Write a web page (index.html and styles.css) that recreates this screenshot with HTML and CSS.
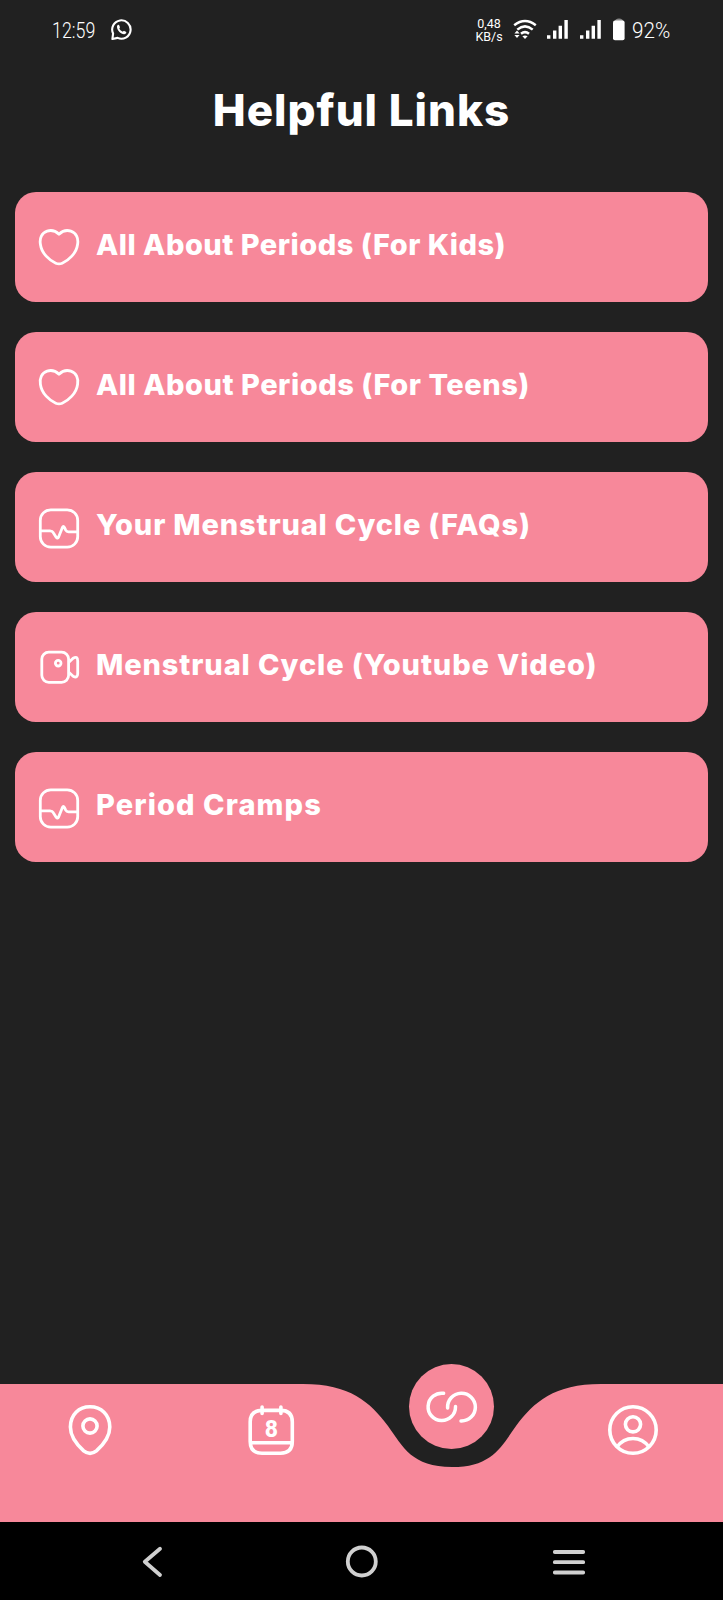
FILE: index.html
```html
<!DOCTYPE html>
<html lang="en">
<head>
<meta charset="utf-8">
<title>Helpful Links</title>
<link rel="stylesheet" href="styles.css">
</head>
<body>
<div class="screen">
  <header class="status">
    <div class="status-left">
      <span class="clock"><span class="squeeze clock-text">12:59</span></span>
      <svg class="whatsapp" width="22" height="22" viewBox="0 0 22 22" fill="none"><path d="M1.4 20 2.1 14.5A9.2 9.2 0 1 1 6.6 18.9Z" stroke="#fff" stroke-width="2.1" stroke-linejoin="round"/><path d="M6 7.4C6.2 5.8 7.7 5.1 8.2 6.3L8.9 7.9C9.2 8.8 8 9.1 8.5 9.9Q9.6 11.8 11.4 12.6C12.1 12.9 12.5 11.5 13.3 11.9L14.9 12.7C15.9 13.3 15 15 13.4 15.2C10.2 15.5 5.7 11.1 6 7.4Z" fill="#fff"/></svg>
    </div>
    <div class="status-right">
      <div class="rate"><span>0,48</span><span>KB/s</span></div>
      <svg class="wifi" width="24" height="22" viewBox="0 0 24 22" fill="none" stroke="#fff" stroke-width="2.5"><path d="M1.2 6.2Q12 -2.2 22.8 6.2M4.3 10.6Q12 4.2 19.7 10.6M8 14.8Q12 11.4 16 14.8" /><path d="M9.4 17.2Q12 15.6 14.6 17.2L12 20Z" fill="#fff" stroke="none"/><path d="M1.4 14.6 4 11.6 6.6 14.6ZM1.4 16 4 19 6.6 16Z" fill="#fff" stroke="none"/></svg>
      <svg class="signal" width="21" height="20" viewBox="0 0 21 20" fill="#fff"><path d="M0 15.3h3.4v3.4H0zM6 10.4h3.4v8.3H6zM11.6 5.7H15v13h-3.4zM17.4 0h3.4v18.7h-3.4z"/></svg>
      <svg class="signal" width="21" height="20" viewBox="0 0 21 20" fill="#fff"><path d="M0 15.3h3.4v3.4H0zM6 10.4h3.4v8.3H6zM11.6 5.7H15v13h-3.4zM17.4 0h3.4v18.7h-3.4z"/></svg>
      <svg class="battery" width="12" height="23" viewBox="0 0 12 23"><path d="M1.5 4Q2 .5 6 .5T10.5 4" fill="#888"/><rect y="2.6" width="11.6" height="19.7" rx="2" fill="#fff"/></svg>
      <span class="percent"><span class="squeeze percent-text">92%</span></span>
    </div>
  </header>

  <main class="content">
    <h1 class="title">Helpful Links</h1>
    <ul class="links">
      <li class="card">
        <svg class="icon icon-heart" viewBox="0 0 48 48"><path d="M24 9.2C20.5 5.8 16.3 4.7 12.1 6.1C6.7 7.8 4.4 13.5 5.4 19.2C6.6 28.5 14.5 35.5 20.8 38.2Q24 39.6 27.2 38.2C33.5 35.5 41.4 28.5 42.6 19.2C43.6 13.5 41.3 7.8 35.9 6.1C31.7 4.7 27.5 5.8 24 9.2Z"/></svg>
        <span class="label label-kids">All About Periods (For Kids)</span>
      </li>
      <li class="card">
        <svg class="icon icon-heart" viewBox="0 0 48 48"><path d="M24 9.2C20.5 5.8 16.3 4.7 12.1 6.1C6.7 7.8 4.4 13.5 5.4 19.2C6.6 28.5 14.5 35.5 20.8 38.2Q24 39.6 27.2 38.2C33.5 35.5 41.4 28.5 42.6 19.2C43.6 13.5 41.3 7.8 35.9 6.1C31.7 4.7 27.5 5.8 24 9.2Z"/></svg>
        <span class="label label-teens">All About Periods (For Teens)</span>
      </li>
      <li class="card">
        <svg class="icon" viewBox="0 0 48 48"><rect x="5.3" y="4.8" width="37.4" height="37.4" rx="10.5"/><path d="M5.3 25.8H15Q17.4 25.8 18.3 27.7L21.3 32.4Q22.6 34 23.6 32L27.5 22.3Q28.3 20.3 29.4 22.3L30.7 25.1Q31.6 26.8 33.5 26.8H42.7"/></svg>
        <span class="label label-faq">Your Menstrual Cycle (FAQs)</span>
      </li>
      <li class="card">
        <svg class="icon icon-video" viewBox="0 0 48 48"><rect x="6.8" y="8.1" width="26.8" height="30.2" rx="7"/><circle cx="23.2" cy="19.2" r="2.8"/><path d="M33.6 18.5 38.1 14.2Q42.7 11.5 42.7 17V29.4Q42.7 34.7 38.1 32.2L33.6 28"/></svg>
        <span class="label label-video">Menstrual Cycle (Youtube Video)</span>
      </li>
      <li class="card">
        <svg class="icon" viewBox="0 0 48 48"><rect x="5.3" y="4.8" width="37.4" height="37.4" rx="10.5"/><path d="M5.3 25.8H15Q17.4 25.8 18.3 27.7L21.3 32.4Q22.6 34 23.6 32L27.5 22.3Q28.3 20.3 29.4 22.3L30.7 25.1Q31.6 26.8 33.5 26.8H42.7"/></svg>
        <span class="label label-cramps">Period Cramps</span>
      </li>
    </ul>
  </main>

  <nav class="tabs">
    <svg class="tabs-shape" width="723" height="138" viewBox="0 0 723 138"><path d="M0 0H303C350 0 370 18 388 42C403 63 412 83 452 83C492 83 501 63 516 42C534 18 554 0 601 0H723V138H0Z" fill="#f7889a"/></svg>
    <a class="tab"><svg class="tab-icon" viewBox="0 0 60 60"><circle cx="30" cy="26" r="7.1"/><path d="M10.4 27C10.4 14.5 19 6.8 30 6.8S49.8 14.5 49.8 27C49.8 36 43 45 36.4 50.8Q30 55.8 23.7 50.8C17.2 45 10.4 36 10.4 27Z"/></svg></a>
    <a class="tab"><svg class="tab-icon" viewBox="0 0 60 60"><path d="M21.1 7v6.4M39.9 7v6.4" stroke-linecap="round"/><path d="M9.2 22Q9.2 10.4 21 10.4H39.6Q51.3 10.4 51.3 22V41.6Q51.3 53.2 39.6 53.2H21Q9.2 53.2 9.2 41.6ZM9.2 42.8H51.3"/><text class="date" x="30.4" y="37.4">8</text></svg></a>
    <a class="tab tab-active"><span class="bubble"><svg class="link-icon" viewBox="0 0 60 60"><path d="M21.6 16.3A13.7 13.7 0 1 0 33.5 29.6M25.6 31A13.9 13.9 0 1 1 39 44" stroke-linecap="round"/></svg></span></a>
    <a class="tab"><svg class="tab-icon" viewBox="0 0 60 60"><circle cx="30" cy="30" r="23.2"/><circle cx="30" cy="24.3" r="7.6"/><path d="M14 47Q20 38.5 30 38.5T46 47"/></svg></a>
  </nav>

  <footer class="system">
    <svg class="sys-icon" viewBox="0 0 40 40"><path d="M29 7.8 13.8 20.8 29 34"/></svg>
    <svg class="sys-icon" viewBox="0 0 40 40"><circle cx="21.8" cy="20.5" r="14"/></svg>
    <svg class="sys-icon" viewBox="0 0 40 40"><path d="M5.8 11H34.2M5.8 21.2H34.2M5.8 31.5H34.2"/></svg>
  </footer>
</div>
</body>
</html>
```
FILE: styles.css
```css
* { box-sizing: border-box; }
body { margin: 0; background: #212121; color: #fff; font-family: Inter, "Liberation Sans", sans-serif; }
svg { display: block; flex: none; }

.screen { width: 723px; height: 1600px; display: flex; flex-direction: column; background: #212121; overflow: hidden; }

.status { height: 60px; padding: 0 41px 0 52px; display: flex; justify-content: space-between; align-items: center; font-family: Roboto, sans-serif; }
.status-left, .status-right { display: flex; align-items: center; }
.clock { width: 59px; }
.squeeze { display: inline-block; transform-origin: left center; font-weight: 300; white-space: nowrap; }
.clock-text { font-size: 22px; line-height: 61px; transform: scaleX(.81); }
.rate { width: 26px; margin-right: 11px; display: flex; flex-direction: column; align-items: center; font-size: 12.5px; line-height: 13px; white-space: nowrap; }
.wifi { margin-right: 10px; }
.signal { margin-right: 12px; }
.battery { margin: 0 7px 2px 0; }
.percent { width: 50px; }
.percent-text { font-size: 22px; line-height: 61px; transform: scaleX(.94); }

.content { flex: 1; }
.title { margin: 18px 0 0; height: 114px; text-align: center; font-size: 44px; line-height: 64px; font-weight: 800; letter-spacing: 1px; }
.links { margin: 0; padding: 0 15px; list-style: none; display: flex; flex-direction: column; gap: 30px; }
.card { height: 110px; padding: 0 20px; display: flex; align-items: center; gap: 13px; border-radius: 21px; background: #f7889a; }
.icon { width: 48px; height: 48px; margin-top: 3px; fill: none; stroke: #fff; stroke-width: 2.8; stroke-linejoin: round; }
.icon-heart { margin-top: 4px; }
.icon-video { margin-top: 2px; }
.label { font-size: 29px; line-height: 40px; font-weight: 800; padding-bottom: 5px; white-space: nowrap; }
.label-kids { letter-spacing: .5px; }
.label-teens { letter-spacing: .53px; }
.label-faq { letter-spacing: .84px; }
.label-video { letter-spacing: .88px; }
.label-cramps { letter-spacing: 1.1px; }

.tabs { position: relative; height: 138px; display: grid; grid-template-columns: repeat(4, 1fr); }
.tabs-shape { position: absolute; left: 0; top: 0; }
.tab { position: relative; display: flex; justify-content: center; align-items: flex-start; padding-top: 16px; }
.tab-icon { width: 60px; height: 60px; fill: none; stroke: #fff; stroke-width: 3.6; }
.date { fill: #fff; stroke: none; font-family: Roboto, sans-serif; font-size: 23px; font-weight: 800; text-anchor: middle; }
.tab-active { padding-top: 0; }
.bubble { width: 85px; height: 85px; margin-top: -20px; border-radius: 50%; background: #f7889a; display: flex; justify-content: center; align-items: center; }
.link-icon { width: 60px; height: 60px; fill: none; stroke: #fff; stroke-width: 3.5; }

.system { height: 78px; padding: 0 134px 0 131px; display: flex; justify-content: space-between; align-items: center; background: #000; }
.sys-icon { width: 40px; height: 40px; fill: none; stroke: #d0d0d0; stroke-width: 3.8; stroke-linecap: round; stroke-linejoin: round; }
```
